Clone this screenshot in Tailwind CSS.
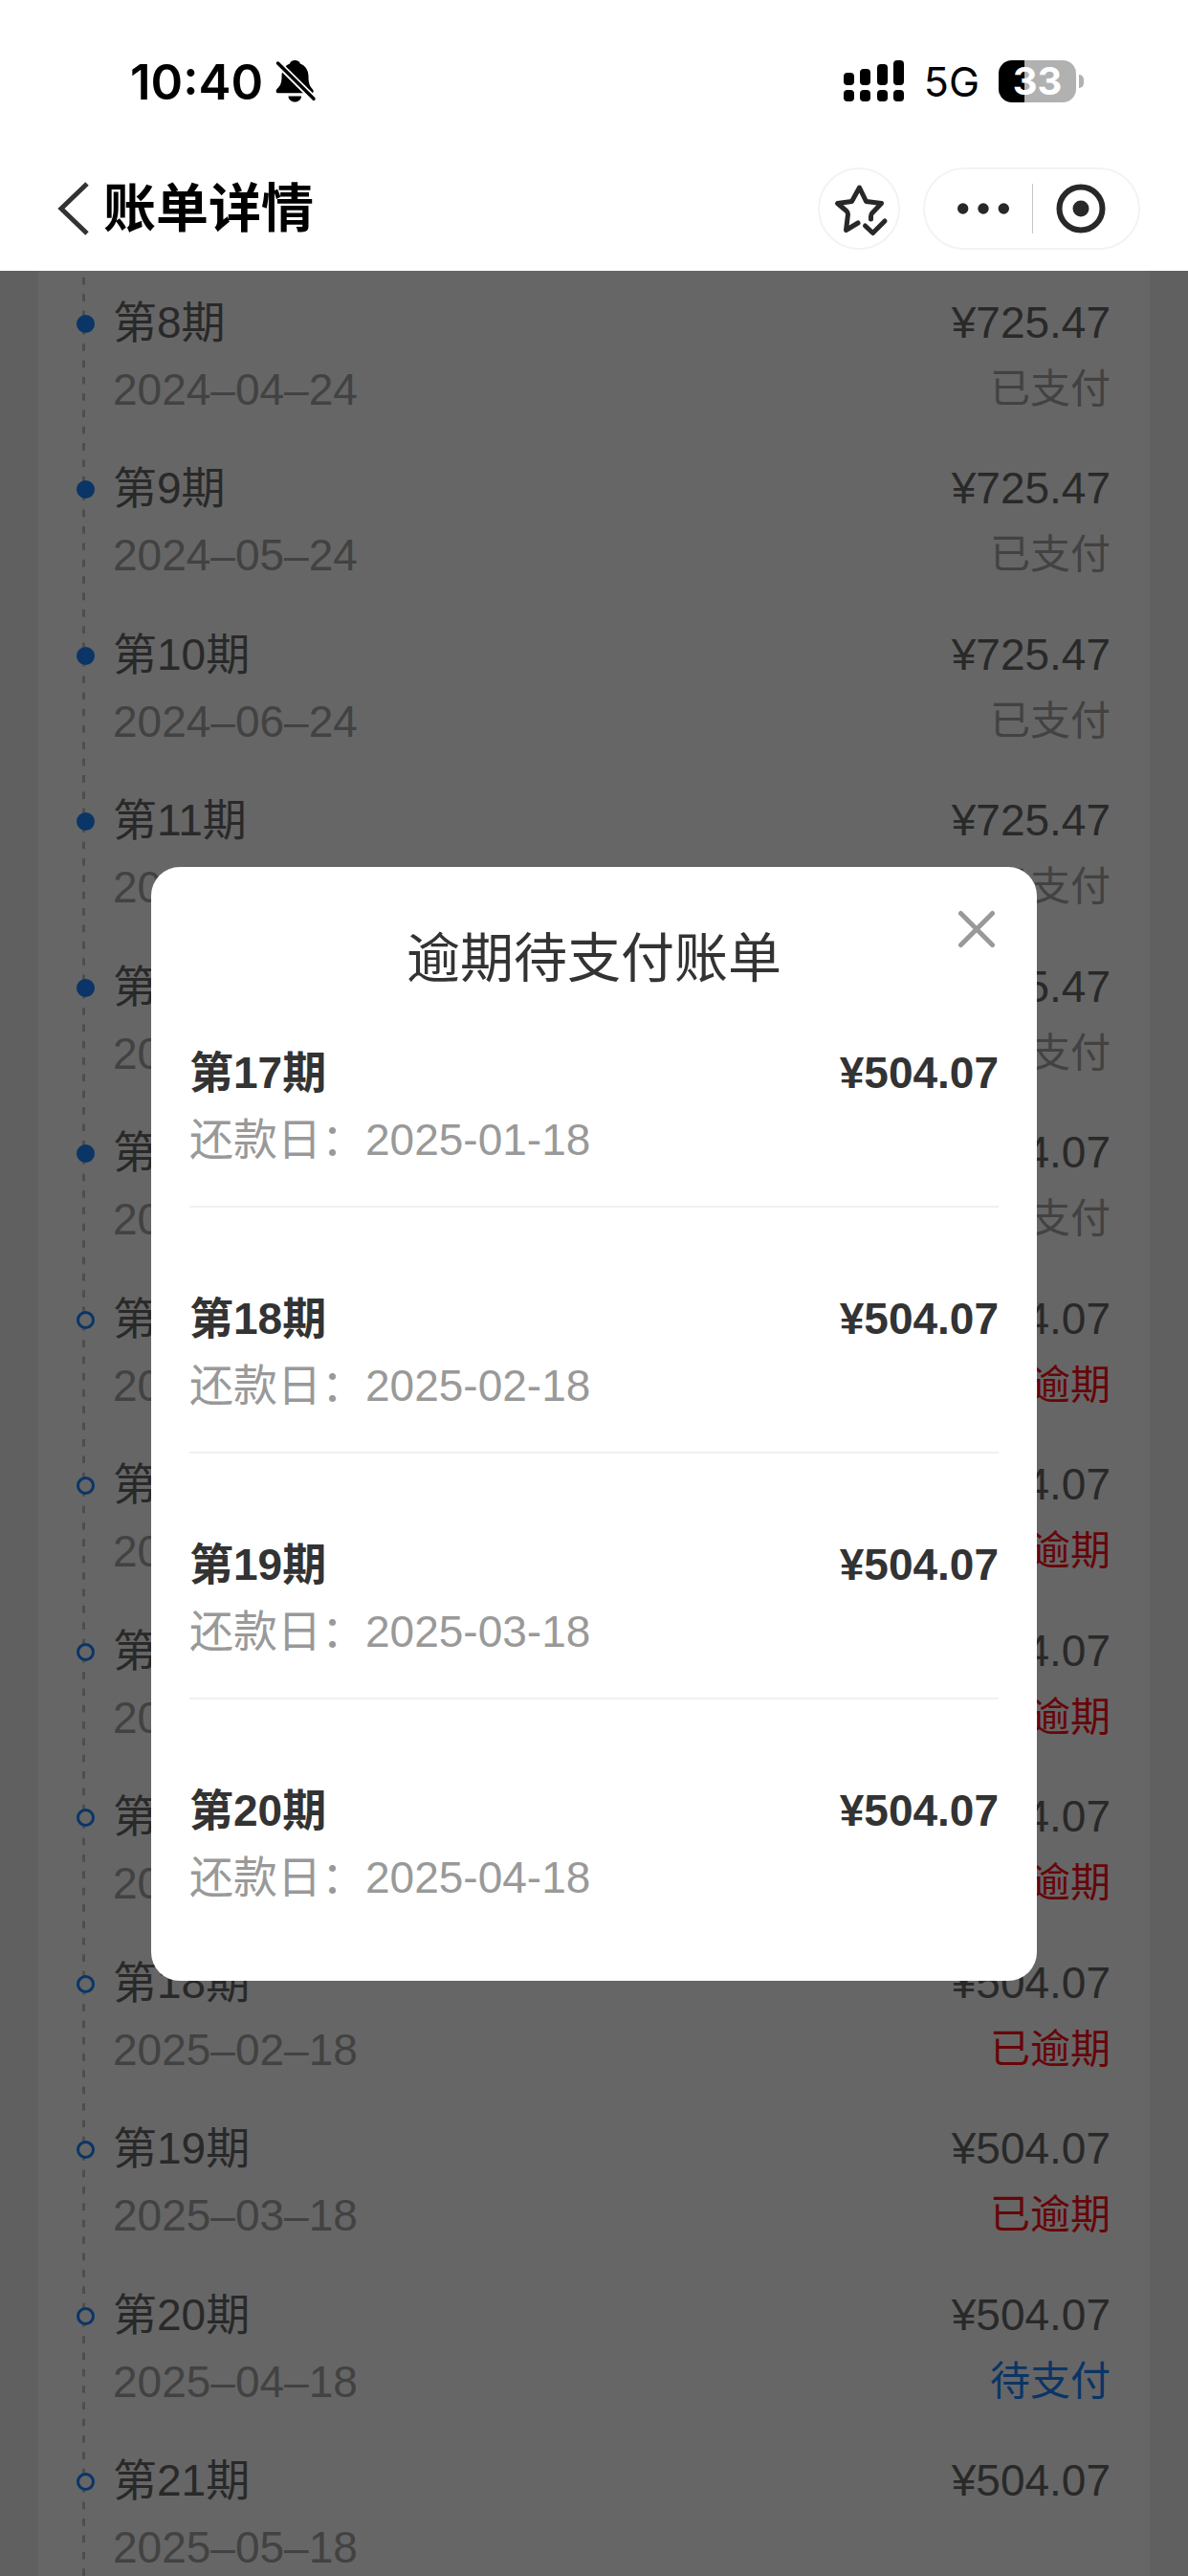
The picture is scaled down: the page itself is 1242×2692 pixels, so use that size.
<!DOCTYPE html>
<html lang="zh-CN">

<head>
    <meta charset="UTF-8">
    <meta name="viewport" content="width=device-width, initial-scale=1.0">
    <title>账单详情</title>
    <script src="https://cdn.jsdelivr.net/npm/@tailwindcss/browser@4"></script>
</head>

<body class="flex h-screen flex-col overflow-hidden bg-[#f0f0f0] font-['Liberation_Sans','Noto_Sans_CJK_SC',sans-serif]">
    <header class="shrink-0 bg-white pb-[17px]">
        <!-- Status bar -->
        <div class="flex h-[170px] items-center justify-between pl-[136px] pr-[109px] font-['Inter',sans-serif] text-black">
            <div class="flex items-center gap-3">
                <span class="text-[51px] font-semibold leading-none">10:40</span>
                <svg class="h-[46px] w-[44px]" viewBox="0 0 44 46" fill="none" aria-hidden="true">
                    <path fill="currentColor" d="M21.3 1c3 0 5 1.5 5.5 3.5C33 7 35.5 12 35.5 18c0 8 1.500 10 4.500 13.500 1.500 2 .5 3.800-1.500 3.800H4c-2.500 0-3-2.300-1.500-4.300C5.500 28 7.500 26 7.500 18c0-6 2.500-11 8.500-13.500C16.500 2.500 18.500 1 21.300 1z" />
                    <path fill="currentColor" d="M14.500 38.500h13.500c0 3.500-3 6-6.700 6s-6.800-2.500-6.800-6z" />
                    <path stroke="#fff" stroke-width="7" d="M0 .7 44 44.300" />
                    <path stroke="currentColor" stroke-width="3.500" stroke-linecap="round" d="M3.500 4 41 41.300" />
                </svg>
            </div>
            <div class="flex items-center gap-5">
                <svg class="h-[46px] w-[64px]" viewBox="0 0 64 46" fill="currentColor" aria-hidden="true">
                    <rect x="0" y="14" width="11" height="13" rx="4" />
                    <rect x="17" y="10" width="11" height="17" rx="4" />
                    <rect x="35" y="5" width="11" height="22" rx="4" />
                    <rect x="52" y="1" width="11" height="26" rx="4" />
                    <rect x="0" y="32" width="11" height="12" rx="4" />
                    <rect x="17" y="32" width="11" height="12" rx="4" />
                    <rect x="35" y="32" width="11" height="12" rx="4" />
                    <rect x="52" y="32" width="11" height="12" rx="4" />
                </svg>
                <span class="text-[43px] leading-none">5G</span>
                <div class="flex items-center gap-[3px]">
                    <div class="flex h-[44px] w-[81px] items-center justify-center rounded-[14px] bg-linear-to-r from-black from-33% to-[#b1b1b1] to-33%">
                        <span class="text-[40px] font-bold leading-none text-white">33</span>
                    </div>
                    <div class="h-[14px] w-[5px] rounded-r-full bg-[#b1b1b1]"></div>
                </div>
            </div>
        </div>

        <!-- Navigation -->
        <div class="flex h-[96px] items-center justify-between pl-[58px] pr-[50px]">
            <div class="flex items-center gap-[14px]">
                <button type="button" aria-label="返回">
                    <svg class="h-[56px] w-[36px] text-[#333]" viewBox="0 0 36 56" fill="none" stroke="currentColor" stroke-width="5" aria-hidden="true">
                        <path d="M33 2 6 28l27 26" />
                    </svg>
                </button>
                <h1 class="text-[55px] font-bold leading-none text-black">账单详情</h1>
            </div>
            <div class="flex items-center gap-6 text-[#282828]">
                <button type="button" aria-label="收藏" class="size-[86px] rounded-full border-2 border-[#f3f3f3]">
                    <svg class="size-full" viewBox="2 2 82 82" fill="none" stroke="currentColor" stroke-width="5" stroke-linecap="round" stroke-linejoin="round" aria-hidden="true">
                        <path d="M42 58 29.500 65.500 31.500 49c0-1.500-.5-2.500-1.500-3.500L20.500 37.500 35.500 35.500 43.500 21 50.500 35.500 66.500 37.500 56.500 48c-1 1-1 2-1 3.500V54" />
                        <path d="m49.500 61 8 7.500L70 56" />
                    </svg>
                </button>
                <div class="flex h-[86px] items-center gap-6 rounded-full border-2 border-[#f3f3f3] px-[34px]">
                    <button type="button" aria-label="更多">
                        <svg class="h-[50px] w-[54px]" viewBox="0 0 54 50" fill="currentColor" aria-hidden="true">
                            <circle cx="5.700" cy="25" r="5.700" />
                            <circle cx="27" cy="25" r="5.700" />
                            <circle cx="48.300" cy="25" r="5.700" />
                        </svg>
                    </button>
                    <div class="h-[52px] w-px bg-[#c4c4c4]"></div>
                    <button type="button" aria-label="关闭小程序">
                        <svg class="size-[52px]" viewBox="0 0 52 52" fill="none" aria-hidden="true">
                            <circle cx="26" cy="26" r="22.500" stroke="currentColor" stroke-width="6" />
                            <circle cx="26" cy="26" r="8.500" fill="currentColor" />
                        </svg>
                    </button>
                </div>
            </div>
        </div>
    </header>

    <main class="relative flex-1 overflow-hidden">
        <ul id="billList" class="mx-10 bg-white pl-[40px] pr-[41px] pt-[7px]">
            <!-- Instalments are added here -->
        </ul>

        <!-- Overdue bills dialog -->
        <div class="absolute inset-0 flex items-center bg-black/60 px-[158px]">
            <section role="dialog" aria-modal="true" aria-labelledby="dialogTitle" class="relative w-full rounded-[30px] bg-white px-10 pb-[73px] pt-[66px]">
                <h2 id="dialogTitle" class="mb-[54px] text-center text-[56px] leading-[60px] text-[#333]">逾期待支付账单</h2>
                <button type="button" aria-label="关闭" class="absolute right-[43px] top-[45px]">
                    <svg class="size-[40px] text-[#999]" viewBox="0 0 40 40" fill="none" stroke="currentColor" stroke-width="5" stroke-linecap="round" aria-hidden="true">
                        <path d="m3.500 3.500 33 33M36.500 3.500l-33 33" />
                    </svg>
                </button>
                <ul id="overdueList" class="flex flex-col gap-[81px]">
                    <!-- Overdue instalments are added here -->
                </ul>
            </section>
        </div>
    </main>

    <script>
        const bills = [
            { no: 8, date: '2024–04–24', amount: '725.47', status: 'paid' },
            { no: 9, date: '2024–05–24', amount: '725.47', status: 'paid' },
            { no: 10, date: '2024–06–24', amount: '725.47', status: 'paid' },
            { no: 11, date: '2024–07–24', amount: '725.47', status: 'paid' },
            { no: 12, date: '2024–08–24', amount: '725.47', status: 'paid' },
            { no: 13, date: '2024–09–18', amount: '504.07', status: 'paid' },
            { no: 14, date: '2024–10–18', amount: '504.07', status: 'overdue' },
            { no: 15, date: '2024–11–18', amount: '504.07', status: 'overdue' },
            { no: 16, date: '2024–12–18', amount: '504.07', status: 'overdue' },
            { no: 17, date: '2025–01–18', amount: '504.07', status: 'overdue' },
            { no: 18, date: '2025–02–18', amount: '504.07', status: 'overdue' },
            { no: 19, date: '2025–03–18', amount: '504.07', status: 'overdue' },
            { no: 20, date: '2025–04–18', amount: '504.07', status: 'pending' },
            { no: 21, date: '2025–05–18', amount: '504.07', status: 'none' },
        ];

        const overdue = [
            { no: 17, date: '2025-01-18', amount: '504.07' },
            { no: 18, date: '2025-02-18', amount: '504.07' },
            { no: 19, date: '2025-03-18', amount: '504.07' },
            { no: 20, date: '2025-04-18', amount: '504.07' },
        ];

        const statuses = {
            paid: { text: '已支付', color: 'text-[#a5a5a5]', dot: 'bg-[#1a85ff]' },
            overdue: { text: '已逾期', color: 'text-[#ff1018]', dot: 'bg-white' },
            pending: { text: '待支付', color: 'text-[#1a85ff]', dot: 'bg-white' },
            none: { text: '', color: 'text-[#a5a5a5]', dot: 'bg-white' },
        };

        const billList = document.getElementById('billList');
        bills.forEach(bill => {
            const status = statuses[bill.status];
            const row = document.createElement('li');
            // the dashed line is ten dashes per row
            row.className = 'flex gap-[19px] bg-[linear-gradient(#c4c4c4_46%,transparent_46%)] bg-[length:3px_10%] bg-[position:6px_0] bg-repeat-y pb-[21px] pt-[12px] even:pb-[22px]';
            row.innerHTML = `
                <span class="mt-[27px] size-[19px] shrink-0 rounded-full border-3 border-[#1a85ff] ${status.dot}"></span>
                <div class="flex-1 leading-[70px]">
                    <div class="flex justify-between text-[46px] text-[#666]">
                        <span>第${bill.no}期</span>
                        <span>¥${bill.amount}</span>
                    </div>
                    <div class="flex justify-between">
                        <span class="text-[46px] text-[#a5a5a5]">${bill.date}</span>
                        <span class="text-[42px] ${status.color}">${status.text}</span>
                    </div>
                </div>
            `;
            billList.appendChild(row);
        });

        const overdueList = document.getElementById('overdueList');
        overdue.forEach(bill => {
            const row = document.createElement('li');
            row.className = 'text-[46px] leading-[70px] not-last:border-b-2 not-last:border-[#f0f0f0] not-last:pb-[34px]';
            row.innerHTML = `
                <div class="flex justify-between font-bold text-[#333]">
                    <span>第${bill.no}期</span>
                    <span>¥${bill.amount}</span>
                </div>
                <div class="text-[#999]">还款日：${bill.date}</div>
            `;
            overdueList.appendChild(row);
        });
    </script>
</body>

</html>
